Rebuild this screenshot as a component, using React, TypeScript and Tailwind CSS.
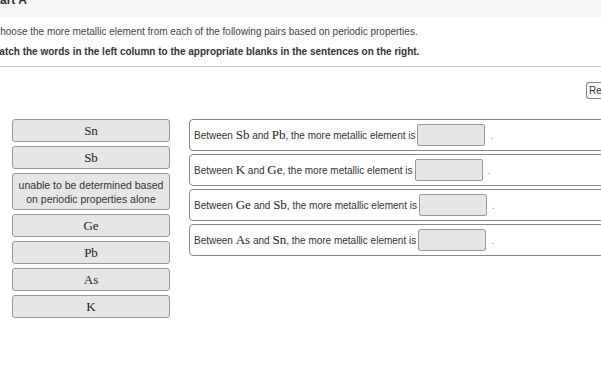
import React from 'react';

const sans = "font-['Liberation_Sans',Arial,sans-serif]";
const serif = "font-['Liberation_Serif','Times_New_Roman',serif]";

const items: { label: string; long?: boolean }[] = [
  { label: 'Sn' },
  { label: 'Sb' },
  { label: 'unable to be determined based on periodic properties alone', long: true },
  { label: 'Ge' },
  { label: 'Pb' },
  { label: 'As' },
  { label: 'K' },
];

const rows = [
  ['Sb', 'Pb'],
  ['K', 'Ge'],
  ['Ge', 'Sb'],
  ['As', 'Sn'],
];

function Sym({ s }: { s: string }) {
  return <span className={`${serif} text-[13px] text-[#222]`}>{s}</span>;
}

export default function App() {
  return (
    <div className={`w-[601px] h-[381px] bg-white overflow-hidden ${sans}`}>
      {/* header */}
      <div className="h-[17px] bg-[#f6f6f6] overflow-hidden">
        <div className="ml-[-8px] mt-[-7px] text-[12px] font-bold text-[#333] leading-[14px]">Part A</div>
      </div>

      <div className="ml-[-7px] mt-[9px] text-[10px] leading-[12px] text-[#444] whitespace-nowrap">
        Choose the more metallic element from each of the following pairs based on periodic properties.
      </div>
      <div className="ml-[-9px] mt-[8px] text-[10px] leading-[12px] font-bold text-[#333] whitespace-nowrap">
        Match the words in the left column to the appropriate blanks in the sentences on the right.
      </div>
      <div className="mt-[8px] h-px bg-[#c6c6c6]" />

      <div className="flex justify-end mt-[15px] h-[17px]">
        <div className="w-[15px] border border-r-0 border-[#888] rounded-l-[3px] text-[10px] leading-[15px] pl-[2px] text-[#333] overflow-hidden whitespace-nowrap">
          Re
        </div>
      </div>

      <div className="flex items-start mt-[20px] pl-[12px]">
        {/* left column */}
        <div className="w-[158px] shrink-0 flex flex-col gap-[4px]">
          {items.map((it) =>
            it.long ? (
              <div
                key={it.label}
                className="h-[37px] border border-[#999] rounded-[3px] bg-[#e6e6e6] flex items-center justify-center text-center text-[10.5px] leading-[14px] text-[#333] whitespace-nowrap"
              >
                unable to be determined based
                <br />
                on periodic properties alone
              </div>
            ) : (
              <div
                key={it.label}
                className="h-[23px] border border-[#999] rounded-[3px] bg-[#e6e6e6] flex items-center justify-center"
              >
                <Sym s={it.label} />
              </div>
            )
          )}
        </div>

        {/* right column */}
        <div className="ml-[19px] w-[440px] shrink-0 flex flex-col gap-[3px]">
          {rows.map(([a, b], i) => (
            <div
              key={i}
              className="h-[32px] border border-[#888] rounded-[4px] flex items-center pl-[4px] text-[10px] text-[#333] whitespace-nowrap"
            >
              <span>Between&nbsp;</span>
              <Sym s={a} />
              <span>&nbsp;and&nbsp;</span>
              <Sym s={b} />
              <span>, the more metallic element is</span>
              <div className="ml-[2px] w-[68px] h-[22px] border border-[#999] rounded-[2px] bg-[#e6e6e6]" />
              <span className="ml-[5px] text-[#999]">.</span>
            </div>
          ))}
        </div>
      </div>
    </div>
  );
}
